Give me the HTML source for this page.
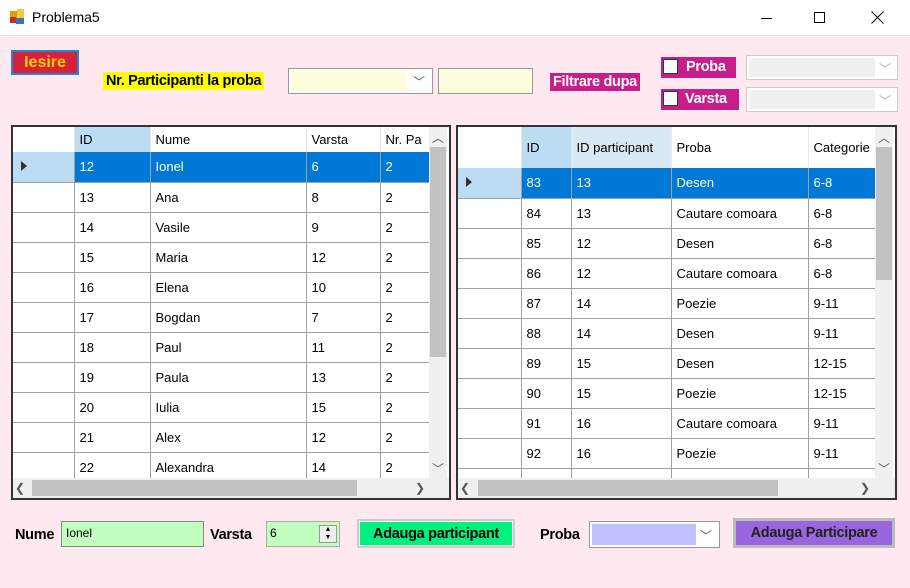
<!DOCTYPE html>
<html><head><meta charset="utf-8"><style>
*{margin:0;padding:0;box-sizing:border-box}
body{width:910px;height:588px;background:#fde9ef;font-family:"Liberation Sans",sans-serif;font-size:13px;position:relative;overflow:hidden}
.abs{position:absolute}
.title{left:0;top:0;width:910px;height:36px;background:#fff;border-bottom:1px solid #f0d8de}
.grid{border:1px solid #333;background:#fff;overflow:hidden}
table{border-collapse:collapse;table-layout:fixed;position:absolute;left:0;top:0}
td{border-right:1px solid #a0a0a0;border-bottom:1px solid #a0a0a0;padding-left:5px;white-space:nowrap;overflow:hidden;font-size:13px;color:#000}
td.rh{border-right:1px solid #a0a0a0;background:#fff}
tr.h td{border-bottom:none;background:#fff;border-right:1px solid #e8e8e8}
tr.h td.sel{background:#bcdcf4}
tr.h td.sel2{background:#d8e8f5}
tr.s td{background:#0078d7;color:#fff}
tr.s td.rh{background:#bcdcf4}
.tri{display:inline-block;width:0;height:0;border-left:6px solid #333;border-top:5px solid transparent;border-bottom:5px solid transparent;margin-left:3px}
.vs{background:#f0f0f0}
.thumb{background:#c2c2c2}
.arr{color:#555;font-size:12px;text-align:center}
.lbl{font-weight:bold;font-size:14.5px;letter-spacing:-0.3px}
</style></head><body>
<div class="abs title">
 <div class="abs" style="left:10px;top:11px;width:7px;height:7px;background:#e0a000"></div>
 <div class="abs" style="left:17px;top:9px;width:7px;height:9px;background:#f5c842"></div>
 <div class="abs" style="left:10px;top:17px;width:6px;height:6px;background:#c03030"></div>
 <div class="abs" style="left:16px;top:18px;width:8px;height:6px;background:#3a70d0"></div>
 <div class="abs" style="left:32px;top:9px;font-size:14px">Problema5</div>
 <div class="abs" style="left:761px;top:18px;width:11px;height:1px;background:#000"></div>
 <div class="abs" style="left:814px;top:12px;width:11px;height:11px;border:1px solid #000"></div>
 <svg class="abs" style="left:871px;top:11px" width="13" height="13"><path d="M0.5 0.5L12.5 12.5M12.5 0.5L0.5 12.5" stroke="#000" stroke-width="1"/></svg>
</div>

<div class="abs" style="left:11px;top:50px;width:68px;height:25px;border:2px solid #1e88d0;background:#d8203a;color:#f8d000;font-weight:bold;font-size:16px;text-align:center;line-height:21px">Iesire</div>
<div class="abs lbl" style="left:103px;top:72px;background:#ffff00;padding:0 3px;line-height:18px">Nr. Participanti la proba</div>
<div class="abs" style="left:288px;top:68px;width:145px;height:26px;border:1px solid #999;background:#fff"><div class="abs" style="left:2px;top:2px;width:116px;height:20px;background:#ffffe0"></div><div class="abs arr" style="left:124px;top:4px">﹀</div></div>
<div class="abs" style="left:438px;top:68px;width:95px;height:26px;border:1px solid #999;background:#ffffe0"></div>
<div class="abs lbl" style="left:550px;top:73px;background:#c81e8c;color:#fff;padding:0 3px;line-height:18px">Filtrare dupa</div>
<div class="abs" style="left:661px;top:57px;width:75px;height:21px;background:#c81e8c"><div class="abs" style="left:2px;top:2px;width:15px;height:15px;background:#fff;border:1px solid #333"></div><div class="abs lbl" style="left:25px;top:2px;color:#fff">Proba</div></div>
<div class="abs" style="left:661px;top:89px;width:78px;height:21px;background:#c81e8c"><div class="abs" style="left:2px;top:2px;width:15px;height:15px;background:#fff;border:1px solid #333"></div><div class="abs lbl" style="left:24px;top:2px;color:#fff">Varsta</div></div>
<div class="abs" style="left:746px;top:55px;width:152px;height:25px;border:1px solid #ccc;background:#fff"><div class="abs" style="left:2px;top:2px;width:126px;height:19px;background:#f0f0f0"></div><div class="abs arr" style="left:132px;top:4px;color:#aaa">﹀</div></div>
<div class="abs" style="left:746px;top:87px;width:152px;height:25px;border:1px solid #ccc;background:#fff"><div class="abs" style="left:2px;top:2px;width:126px;height:19px;background:#f0f0f0"></div><div class="abs arr" style="left:132px;top:4px;color:#aaa">﹀</div></div>

<!-- left grid -->
<div class="abs grid" style="left:11px;top:125px;width:440px;height:375px;border-width:2px">
<table style="width:416px">
<colgroup><col style="width:61px"><col style="width:76px"><col style="width:156px"><col style="width:74px"><col style="width:49px"></colgroup>
<tr class="h" style="height:25px"><td class="rh"></td><td class="sel">ID</td><td>Nume</td><td>Varsta</td><td>Nr. Pa</td></tr>
<tr class="s" style="height:30px"><td class="rh"><span class="tri"></span></td><td>12</td><td>Ionel</td><td>6</td><td>2</td></tr>
<tr style="height:30px"><td class="rh"></td><td>13</td><td>Ana</td><td>8</td><td>2</td></tr>
<tr style="height:30px"><td class="rh"></td><td>14</td><td>Vasile</td><td>9</td><td>2</td></tr>
<tr style="height:30px"><td class="rh"></td><td>15</td><td>Maria</td><td>12</td><td>2</td></tr>
<tr style="height:30px"><td class="rh"></td><td>16</td><td>Elena</td><td>10</td><td>2</td></tr>
<tr style="height:30px"><td class="rh"></td><td>17</td><td>Bogdan</td><td>7</td><td>2</td></tr>
<tr style="height:30px"><td class="rh"></td><td>18</td><td>Paul</td><td>11</td><td>2</td></tr>
<tr style="height:30px"><td class="rh"></td><td>19</td><td>Paula</td><td>13</td><td>2</td></tr>
<tr style="height:30px"><td class="rh"></td><td>20</td><td>Iulia</td><td>15</td><td>2</td></tr>
<tr style="height:30px"><td class="rh"></td><td>21</td><td>Alex</td><td>12</td><td>2</td></tr>
<tr style="height:30px"><td class="rh"></td><td>22</td><td>Alexandra</td><td>14</td><td>2</td></tr>
</table>
<div class="abs vs" style="left:416px;top:0;width:18px;height:351px"><div class="abs arr" style="left:0;top:2px;width:18px">︿</div><div class="abs thumb" style="left:1px;top:20px;width:16px;height:210px"></div><div class="abs arr" style="left:0;top:333px;width:18px">﹀</div></div>
<div class="abs vs" style="left:0;top:351px;width:436px;height:20px"><div class="abs arr" style="left:2px;top:3px">❮</div><div class="abs thumb" style="left:19px;top:2px;width:325px;height:16px"></div><div class="abs arr" style="left:402px;top:3px">❯</div></div>
</div>

<!-- right grid -->
<div class="abs grid" style="left:456px;top:125px;width:441px;height:375px;border-width:2px">
<table style="width:417px">
<colgroup><col style="width:63px"><col style="width:50px"><col style="width:100px"><col style="width:137px"><col style="width:67px"></colgroup>
<tr class="h" style="height:41px"><td class="rh"></td><td class="sel">ID</td><td class="sel2">ID participant</td><td>Proba</td><td>Categorie</td></tr>
<tr class="s" style="height:30px"><td class="rh"><span class="tri"></span></td><td>83</td><td>13</td><td>Desen</td><td>6-8</td></tr>
<tr style="height:30px"><td class="rh"></td><td>84</td><td>13</td><td>Cautare comoara</td><td>6-8</td></tr>
<tr style="height:30px"><td class="rh"></td><td>85</td><td>12</td><td>Desen</td><td>6-8</td></tr>
<tr style="height:30px"><td class="rh"></td><td>86</td><td>12</td><td>Cautare comoara</td><td>6-8</td></tr>
<tr style="height:30px"><td class="rh"></td><td>87</td><td>14</td><td>Poezie</td><td>9-11</td></tr>
<tr style="height:30px"><td class="rh"></td><td>88</td><td>14</td><td>Desen</td><td>9-11</td></tr>
<tr style="height:30px"><td class="rh"></td><td>89</td><td>15</td><td>Desen</td><td>12-15</td></tr>
<tr style="height:30px"><td class="rh"></td><td>90</td><td>15</td><td>Poezie</td><td>12-15</td></tr>
<tr style="height:30px"><td class="rh"></td><td>91</td><td>16</td><td>Cautare comoara</td><td>9-11</td></tr>
<tr style="height:30px"><td class="rh"></td><td>92</td><td>16</td><td>Poezie</td><td>9-11</td></tr>
<tr style="height:30px"><td class="rh"></td><td>93</td><td>17</td><td>Desen</td><td>6-8</td></tr>
</table>
<div class="abs vs" style="left:417px;top:0;width:18px;height:351px"><div class="abs arr" style="left:0;top:2px;width:18px">︿</div><div class="abs thumb" style="left:1px;top:20px;width:16px;height:133px"></div><div class="abs arr" style="left:0;top:333px;width:18px">﹀</div></div>
<div class="abs vs" style="left:0;top:351px;width:437px;height:20px"><div class="abs arr" style="left:2px;top:3px">❮</div><div class="abs thumb" style="left:20px;top:2px;width:300px;height:16px"></div><div class="abs arr" style="left:402px;top:3px">❯</div></div>
</div>

<!-- bottom -->
<div class="abs lbl" style="left:15px;top:527px">Nume</div>
<div class="abs" style="left:61px;top:521px;width:143px;height:26px;border:1px solid #888;background:#c0ffc0;padding:4px 4px;font-size:12px">Ionel</div>
<div class="abs lbl" style="left:210px;top:527px">Varsta</div>
<div class="abs" style="left:266px;top:521px;width:74px;height:26px;border:1px solid #aaa;background:#c0ffc0;padding:4px 3px;font-size:12px">6
 <div class="abs" style="left:52px;top:3px;width:18px;height:18px;border:1px solid #999;background:#eee;font-size:7px;text-align:center;line-height:8px">▲<br>▼</div></div>
<div class="abs" style="left:357px;top:519px;width:158px;height:29px;border:2px solid #ccc;background:#ccc"><div style="width:100%;height:100%;background:#00f080;font-weight:bold;font-size:14.5px;letter-spacing:-0.3px;text-align:center;line-height:24px;border:1px solid #fff">Adauga participant</div></div>
<div class="abs lbl" style="left:540px;top:527px">Proba</div>
<div class="abs" style="left:589px;top:521px;width:131px;height:27px;border:1px solid #999;background:#fff"><div class="abs" style="left:2px;top:2px;width:104px;height:21px;background:#c0c0ff"></div><div class="abs arr" style="left:110px;top:5px">﹀</div></div>
<div class="abs" style="left:733px;top:518px;width:162px;height:30px;background:#bbb;padding:3px"><div style="width:100%;height:100%;background:#9966dd;font-weight:bold;font-size:14.5px;letter-spacing:-0.3px;text-align:center;line-height:24px;color:#222">Adauga Participare</div></div>
</body></html>
